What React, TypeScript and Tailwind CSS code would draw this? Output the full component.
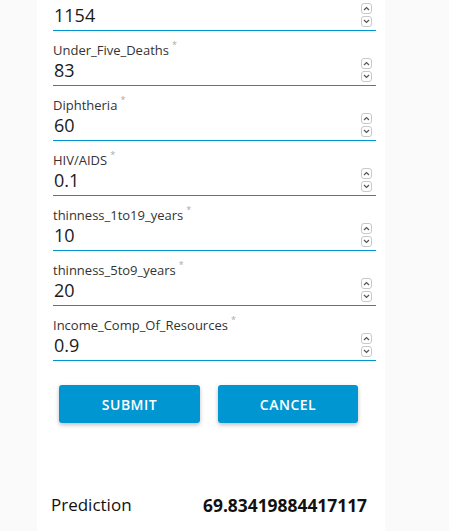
import React from "react";

const fields: [string, string][] = [
  ["Measles", "1154"],
  ["Under_Five_Deaths", "83"],
  ["Diphtheria", "60"],
  ["HIV/AIDS", "0.1"],
  ["thinness_1to19_years", "10"],
  ["thinness_5to9_years", "20"],
  ["Income_Comp_Of_Resources", "0.9"],
];

function Spinner() {
  return (
    <div className="absolute right-[4px] top-[27px] flex flex-col gap-[2px]">
      <div className="w-[11px] h-[11px] rounded-[3px] border border-[#c8c8c8] flex items-center justify-center bg-white">
        <svg width="7" height="5" viewBox="0 0 7 5">
          <path d="M1 4 L3.5 1.5 L6 4" fill="none" stroke="#555" strokeWidth="1.2" />
        </svg>
      </div>
      <div className="w-[11px] h-[11px] rounded-[3px] border border-[#c8c8c8] flex items-center justify-center bg-white">
        <svg width="7" height="5" viewBox="0 0 7 5">
          <path d="M1 1 L3.5 3.5 L6 1" fill="none" stroke="#555" strokeWidth="1.2" />
        </svg>
      </div>
    </div>
  );
}

function Field({ label, value }: { label: string; value: string }) {
  return (
    <div className="relative h-[55px] border-b border-[#0096d1] pt-[10px]">
      <div className="flex items-start text-[13px] leading-[18px] text-[#333]">
        <span>{label}</span>
        <span className="ml-[3px] text-[9px] leading-[10px] text-[#aaa] -mt-[1px]">*</span>
      </div>
      <div className="text-[18px] leading-[24px] text-[#1a1a1a] pl-[1px] -mt-[1px]">{value}</div>
      <Spinner />
    </div>
  );
}

export default function App() {
  return (
    <div
      className="w-[449px] h-[531px] overflow-hidden bg-[#fafafa] flex"
      style={{ fontFamily: '"Open Sans", "DejaVu Sans", sans-serif' }}
    >
      <div className="ml-[37px] w-[348px] h-full bg-white pl-[16px] pr-[9px]">
        <div className="-mt-[24px] w-[323px]">
          {fields.map(([l, v]) => (
            <Field key={l} label={l} value={v} />
          ))}
        </div>
        <div className="mt-[24px] pl-[6px] flex gap-[18px]">
          <button className="w-[141px] h-[38px] rounded-[3px] bg-[#0096d1] text-white text-[14px] font-semibold tracking-[0.5px] shadow-[0_2px_4px_rgba(0,0,0,0.25)]">
            SUBMIT
          </button>
          <button className="w-[140px] h-[38px] rounded-[3px] bg-[#0096d1] text-white text-[14px] font-semibold tracking-[0.5px] shadow-[0_2px_4px_rgba(0,0,0,0.25)]">
            CANCEL
          </button>
        </div>
        <div className="mt-[70px] flex items-center -ml-[2px]">
          <div className="w-[152px] text-[17px] leading-[24px] text-[#111]">Prediction</div>
          <div className="text-[17.4px] leading-[24px] font-bold text-[#111]">69.83419884417117</div>
        </div>
      </div>
    </div>
  );
}
